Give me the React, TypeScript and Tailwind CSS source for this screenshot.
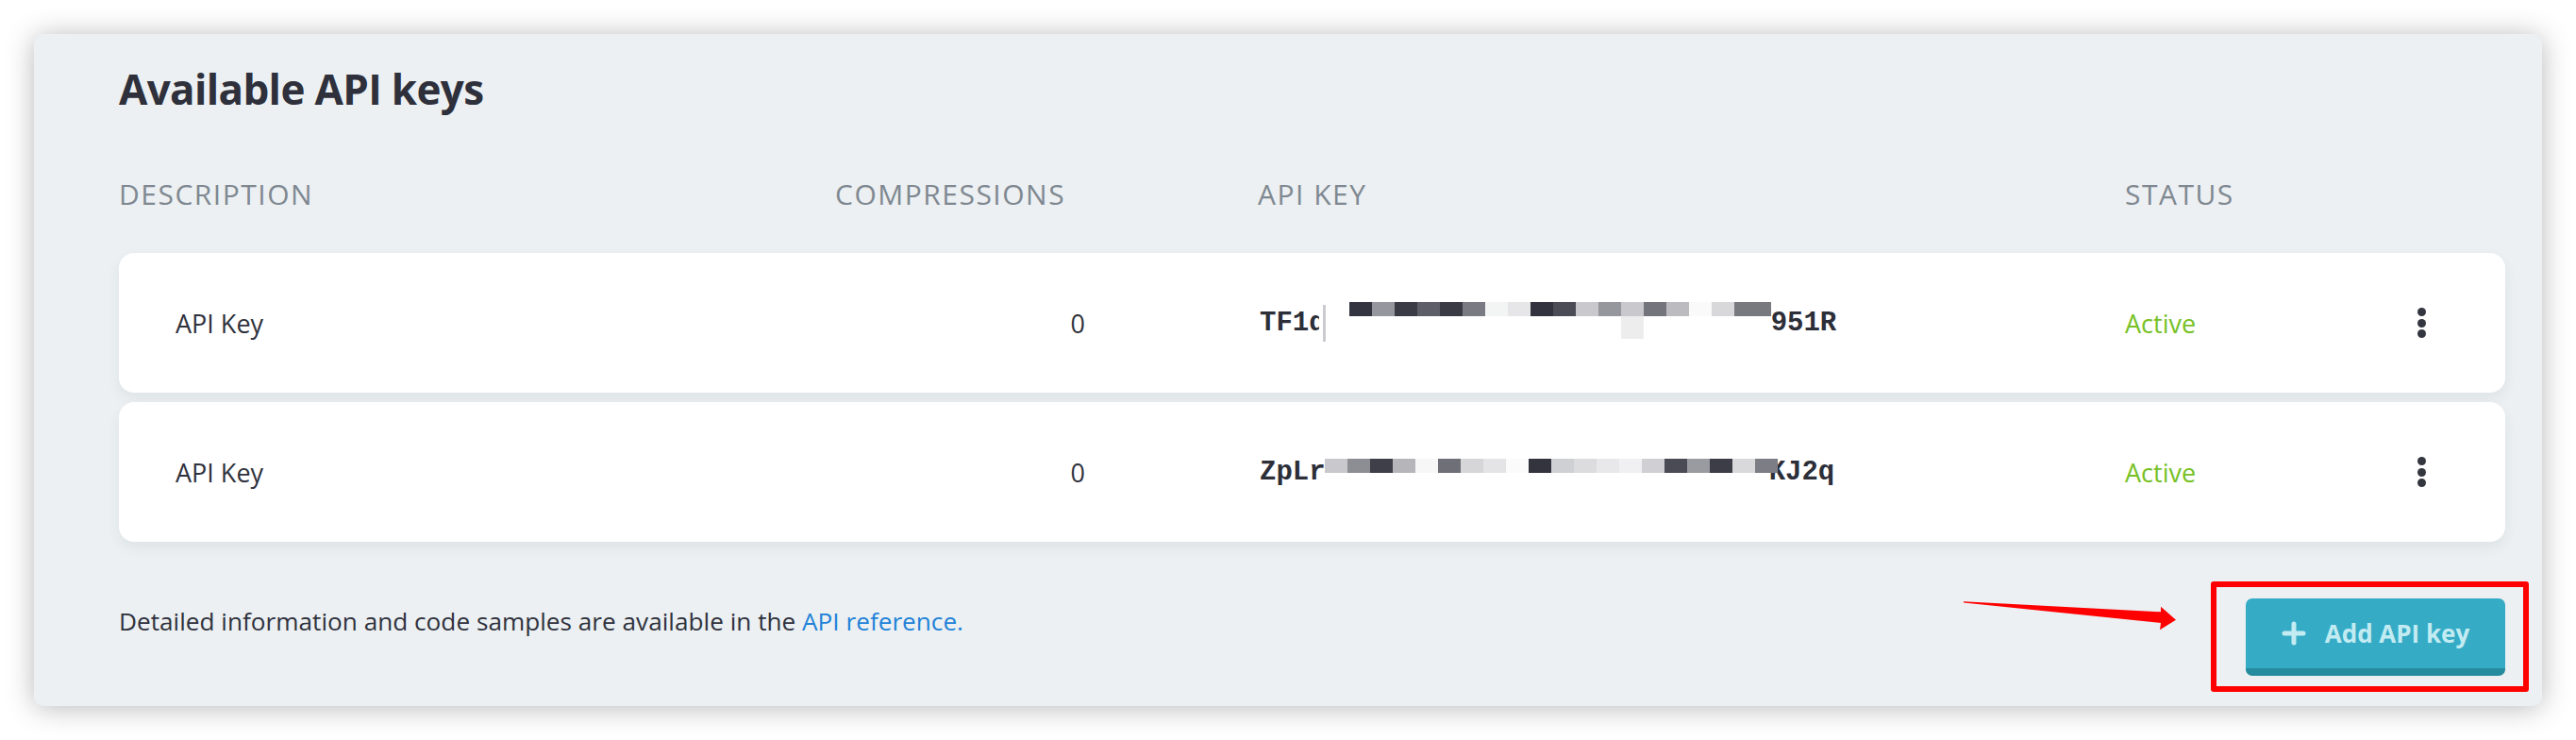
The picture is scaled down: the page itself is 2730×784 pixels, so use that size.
const font = { fontFamily: '"Open Sans", "Noto Sans", sans-serif' };

const row1Blocks = [
  "#33343f", "#96979e", "#3a3b45", "#5d5e67", "#393a44", "#7a7b82", "#f3f4f4", "#e6e6e8", "#32333e",
  "#4b4c56", "#c9c9cd", "#96979d", "#c9c9cd", "#73747c", "#bcbcc0", "#fafafa", "#d8d8da",
];

const row2Blocks = [
  "#c9c9cd", "#8d8e94", "#3e3f49", "#b5b5ba", "#f7f7f8", "#6e6f77", "#d6d6d9", "#e4e4e6", "#fbfbfb", "#33343e",
  "#cfd0d3", "#dcdcdf", "#e8e8ea", "#f0f0f2", "#d0d0d4", "#4a4b55", "#9a9ba0", "#3c3d47", "#d9d9dc", "#7d7e85",
];

const Dots = () => (
  <div className="flex flex-col gap-[2.5px] w-[9px]">
    <span className="w-[9px] h-[9px] rounded-full bg-[#33363f]" />
    <span className="w-[9px] h-[9px] rounded-full bg-[#33363f]" />
    <span className="w-[9px] h-[9px] rounded-full bg-[#33363f]" />
  </div>
);

const KeyRow = ({ children }: { children: React.ReactNode }) => (
  <div className="flex items-center h-[148px] bg-white rounded-[16px] pl-[60px] shadow-[0_6px_14px_rgba(40,60,80,0.07)]">
    <div className="w-[714px] shrink-0 text-[27px] text-[#2f323d] translate-y-[1px]">API Key</div>
    <div className="w-[250px] shrink-0 text-right text-[27px] text-[#2f323d] translate-y-[1px]">0</div>
    <div className="w-[185px] shrink-0" />
    <div className="w-[917px] shrink-0 flex items-center">{children}</div>
    <div className="w-[310px] shrink-0 text-[27px] text-[#77c126] translate-y-[1px]">Active</div>
    <Dots />
  </div>
);

const mono = { fontFamily: '"Liberation Mono", "Courier New", monospace' };

export default function App() {
  return (
    <div className="w-full h-[784px] bg-white pt-[36px] px-[36px]" style={font}>
      <div className="relative h-[712px] rounded-[10px] bg-[#ecf0f2] pl-[90px] pr-[39px] pt-[33px] shadow-[0_2px_30px_rgba(0,0,0,0.28)]">
        <h1 className="h-[50px] leading-[50px] text-[44px] font-bold tracking-[-0.015em] text-[#2e303b]">Available API keys</h1>

        <div className="mt-[61px] h-[50px] flex items-center text-[30px] tracking-[0.05em] text-[#7f8891]">
          <div className="w-[759px] shrink-0">DESCRIPTION</div>
          <div className="w-[448px] shrink-0">COMPRESSIONS</div>
          <div className="w-[919px] shrink-0">API KEY</div>
          <div>STATUS</div>
        </div>

        <div className="mt-[38px] flex flex-col gap-[10px]">
          <KeyRow>
            <span className="text-[29px] font-bold text-[#2c2e38] leading-none" style={mono}>TF1q</span>
            <div className="-ml-[7px] w-[7px] h-[39px] bg-white border-r-[3px] border-[#cbcbcf]" />
            <div className="ml-[25px] flex flex-col -translate-y-[3px]">
              <div className="flex h-[15px]">
                {row1Blocks.map((c, i) => (
                  <span key={i} className="w-[24px] h-[15px]" style={{ background: c }} />
                ))}
                <span className="w-[39px] h-[15px] bg-[#78797f]" />
              </div>
              <div className="flex h-[24px]">
                <span className="w-[288px]" />
                <span className="w-[24px] h-[24px] bg-[#ededee]" />
              </div>
            </div>
            <span className="text-[29px] font-bold text-[#2c2e38] leading-none" style={mono}>951R</span>
          </KeyRow>
          <KeyRow>
            <span className="text-[29px] font-bold text-[#2c2e38] leading-none" style={mono}>ZpLr</span>
            <div className="relative z-10 -ml-[1px] -mr-[9px] flex h-[15px] -translate-y-[7px]">
              {row2Blocks.map((c, i) => (
                <span key={i} className="w-[24px] h-[15px]" style={{ background: c }} />
              ))}
            </div>
            <span className="text-[29px] font-bold text-[#2c2e38] leading-none" style={mono}>KJ2q</span>
          </KeyRow>
        </div>

        <div className="mt-[42px] flex items-start justify-between">
          <p className="mt-[22px] leading-[40px] text-[26.2px] text-[#2f323d]">
            Detailed information and code samples are available in the{" "}
            <a className="text-[#1f82d8]">API reference.</a>
          </p>
          <div className="-mr-[25px] border-[6px] border-[#ff0000] rounded-[3px] pl-[31px] pr-[19px] pt-[12px] pb-[11px]">
            <button className="w-[275px] h-[82px] rounded-[7px] bg-[#35abc6] border-b-[8px] border-[#258b9e] flex items-center justify-center gap-[20px] text-[26px] font-bold text-[#c3ebf2]">
              <svg width="26" height="26" viewBox="0 0 26 26">
                <path d="M13 3v20M3 13h20" stroke="#c3ebf2" strokeWidth="5" strokeLinecap="round" />
              </svg>
              Add API key
            </button>
          </div>
        </div>

        <svg className="absolute left-[2039px] top-[594px]" width="240" height="44" viewBox="0 0 240 44">
          <polygon points="6,7.3 215,18.3 215,12.7 231,26.7 214,37.3 215,30 6,8.5" fill="#ff0000" />
        </svg>
      </div>
    </div>
  );
}
